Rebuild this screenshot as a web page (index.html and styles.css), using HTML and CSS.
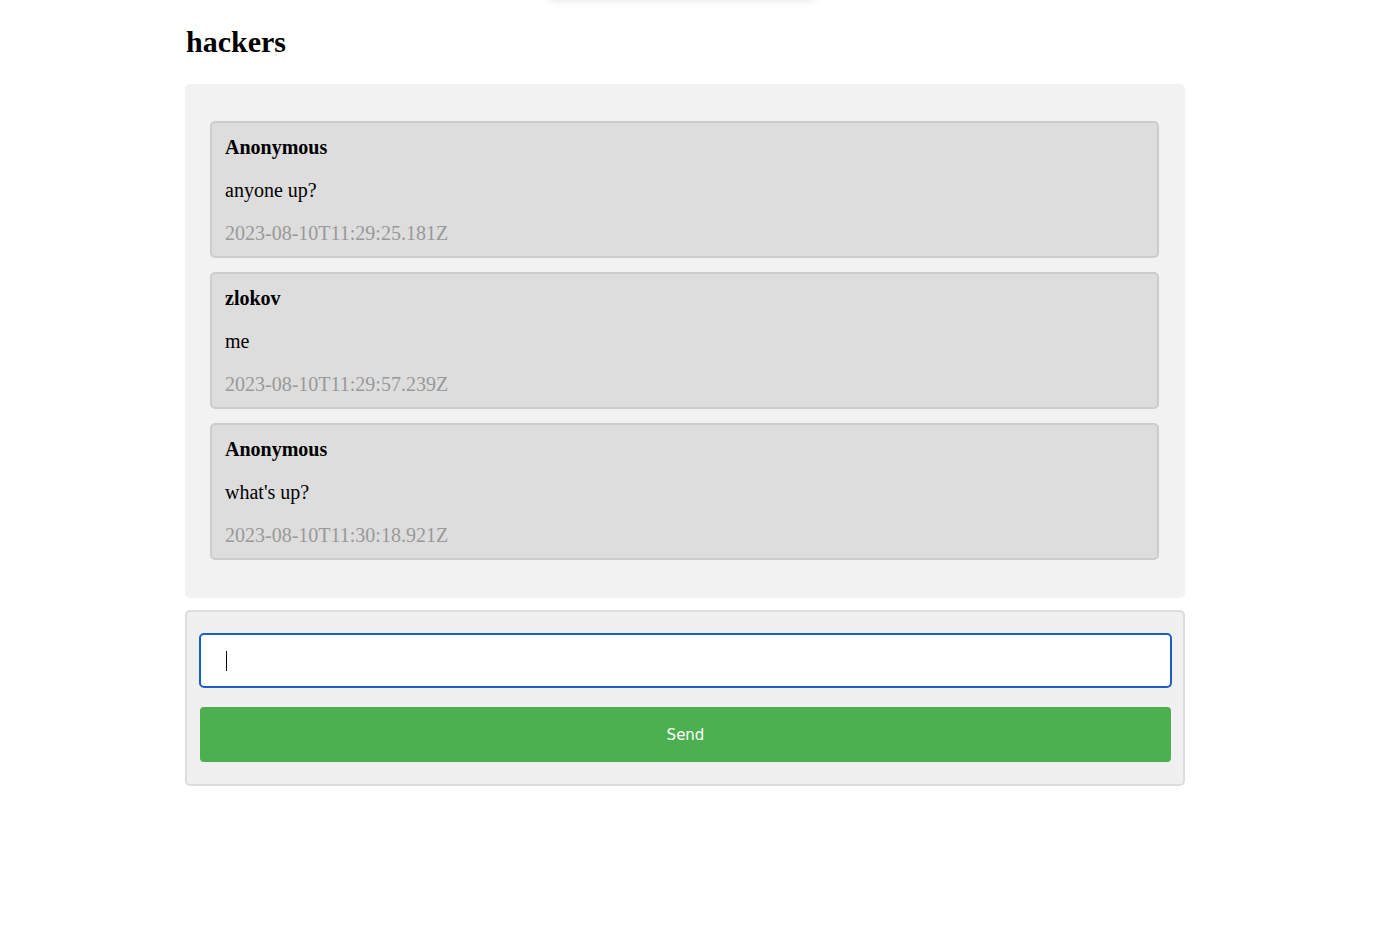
FILE: index.html
```html
<!DOCTYPE html>
<html>
<head>
<meta charset="utf-8">
<title>hackers</title>
<link rel="stylesheet" href="styles.css">
</head>
<body>
<div class="toast"></div>
<div class="page">
  <h1 class="title">hackers</h1>
  <div class="messages">
    <div class="msg">
      <p class="author">Anonymous</p>
      <p class="text">anyone up?</p>
      <p class="time">2023-08-10T11:29:25.181Z</p>
    </div>
    <div class="msg">
      <p class="author">zlokov</p>
      <p class="text">me</p>
      <p class="time">2023-08-10T11:29:57.239Z</p>
    </div>
    <div class="msg">
      <p class="author">Anonymous</p>
      <p class="text">what's up?</p>
      <p class="time">2023-08-10T11:30:18.921Z</p>
    </div>
  </div>
  <form class="composer">
    <div class="input"><span class="caret"></span></div>
    <button type="button" class="send">Send</button>
  </form>
</div>
</body>
</html>
```
FILE: styles.css
```css
html, body {
  margin: 0;
  padding: 0;
  background: #fff;
}
body {
  font-family: "Liberation Serif", "Times New Roman", serif;
  color: #000;
}
.toast {
  position: absolute;
  top: -40px;
  left: 547px;
  width: 270px;
  height: 40px;
  border-radius: 8px;
  box-shadow: 0 0 8px rgba(0, 0, 0, 0.12);
  background: #fff;
}
.page {
  width: 1000px;
  margin: 0 auto;
  padding: 24px 8px 0 0;
}
.title {
  margin: 0 0 25px 1px;
  font-size: 30px;
  line-height: 35px;
  font-weight: bold;
}
.messages {
  background: #f2f2f2;
  border-radius: 5px;
  padding: 37px 26px 38px 25px;
  display: flex;
  flex-direction: column;
  gap: 14px;
}
.msg {
  background: #dddddd;
  border: 2px solid #cccccc;
  border-radius: 5px;
  padding: 13px 13px 11px;
}
.msg p {
  margin: 20px 0 0;
  font-size: 20px;
  line-height: 23px;
}
.msg p:first-child {
  margin-top: 0;
}
.author {
  font-weight: bold;
}
.time {
  color: #999999;
}
.composer {
  margin: 12px 0 0;
  background: #f0f0f0;
  border: 2px solid #dddddd;
  border-radius: 5px;
  padding: 21px 11px 22px 12px;
  display: flex;
  flex-direction: column;
  gap: 19px;
}
.input {
  height: 51px;
  background: #fff;
  border: 2px solid #1a5fc8;
  border-radius: 5px;
  display: flex;
  align-items: center;
  padding-left: 25px;
}
.caret {
  display: block;
  width: 1px;
  height: 20px;
  background: #000;
}
.send {
  margin: 0 1px 0 1px;
  height: 55px;
  background: #4caf50;
  color: #fff;
  border: none;
  border-radius: 4px;
  font-family: "DejaVu Sans", "Liberation Sans", sans-serif;
  font-size: 15px;
  padding: 0;
}
```
